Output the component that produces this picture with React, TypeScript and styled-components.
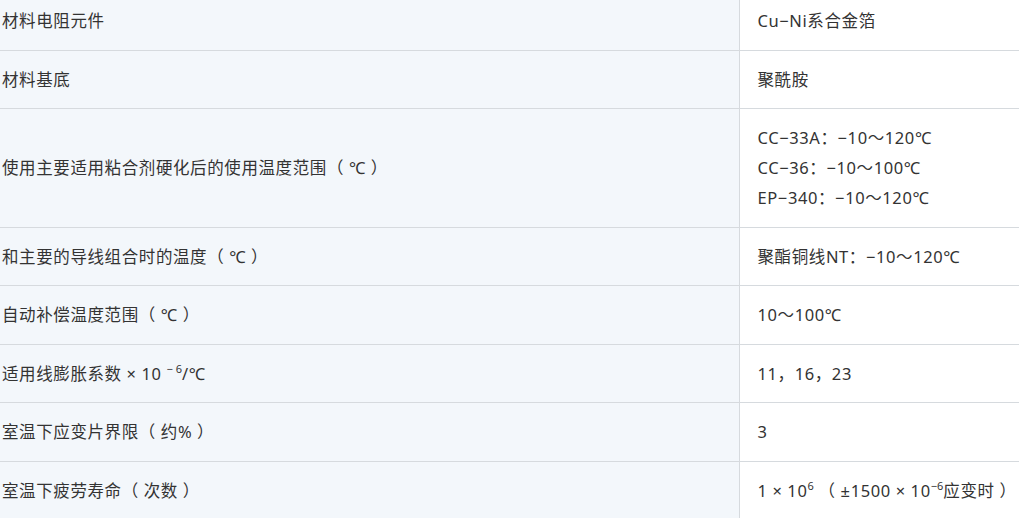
import React from "react";
import styled, { createGlobalStyle } from "styled-components";

const GlobalStyle = createGlobalStyle`
  html, body {
    margin: 0;
    padding: 0;
    background: #ffffff;
  }
  body {
    font-family: "Noto Sans", "Noto Sans CJK SC", sans-serif;
    color: #333333;
  }
`;

const SpecTable = styled.table`
  width: 1019px;
  border-collapse: collapse;
  table-layout: fixed;
  font-size: 16.5px;
  letter-spacing: 0.6px;
  line-height: 30px;
`;

const Row = styled.tr<{ $first?: boolean }>`
  border-bottom: 1px solid #d6dade;

  & > td {
    padding-top: ${(p) => (p.$first ? "6px" : "14px")};
    padding-bottom: 13.5px;
  }
`;

const LabelCell = styled.td`
  width: 739px;
  box-sizing: border-box;
  padding-left: 2px;
  padding-right: 18px;
  background: #f3f7fb;
  border-right: 1px solid #d6dade;
  vertical-align: middle;
`;

const ValueCell = styled.td`
  padding-left: 18px;
  padding-right: 0;
  vertical-align: middle;
  white-space: nowrap;
`;

const Line = styled.div``;

const Sup = styled.sup`
  font-size: 11px;
  line-height: 0;
  vertical-align: 7px;
  letter-spacing: 0;
`;

type Spec = {
  label: React.ReactNode;
  values: React.ReactNode[];
};

const specs: Spec[] = [
  { label: "材料电阻元件", values: ["Cu−Ni系合金箔"] },
  { label: "材料基底", values: ["聚酰胺"] },
  {
    label: "使用主要适用粘合剂硬化后的使用温度范围（ ℃ ）",
    values: ["CC−33A：−10～120℃", "CC−36：−10～100℃", "EP−340：−10～120℃"],
  },
  { label: "和主要的导线组合时的温度（ ℃ ）", values: ["聚酯铜线NT：−10～120℃"] },
  { label: "自动补偿温度范围（ ℃ ）", values: ["10～100℃"] },
  {
    label: (
      <>
        适用线膨胀系数 × 10 <Sup>− 6</Sup>/℃
      </>
    ),
    values: ["11，16，23"],
  },
  { label: "室温下应变片界限（ 约% ）", values: ["3"] },
  {
    label: "室温下疲劳寿命（ 次数 ）",
    values: [
      <>
        1 × 10<Sup>6</Sup> （ ±1500 × 10<Sup>−6</Sup>应变时 ）
      </>,
    ],
  },
];

export default function App() {
  return (
    <>
      <GlobalStyle />
      <SpecTable>
        <tbody>
          {specs.map((spec, i) => (
            <Row key={i} $first={i === 0}>
              <LabelCell>{spec.label}</LabelCell>
              <ValueCell>
                {spec.values.map((v, j) => (
                  <Line key={j}>{v}</Line>
                ))}
              </ValueCell>
            </Row>
          ))}
        </tbody>
      </SpecTable>
    </>
  );
}
